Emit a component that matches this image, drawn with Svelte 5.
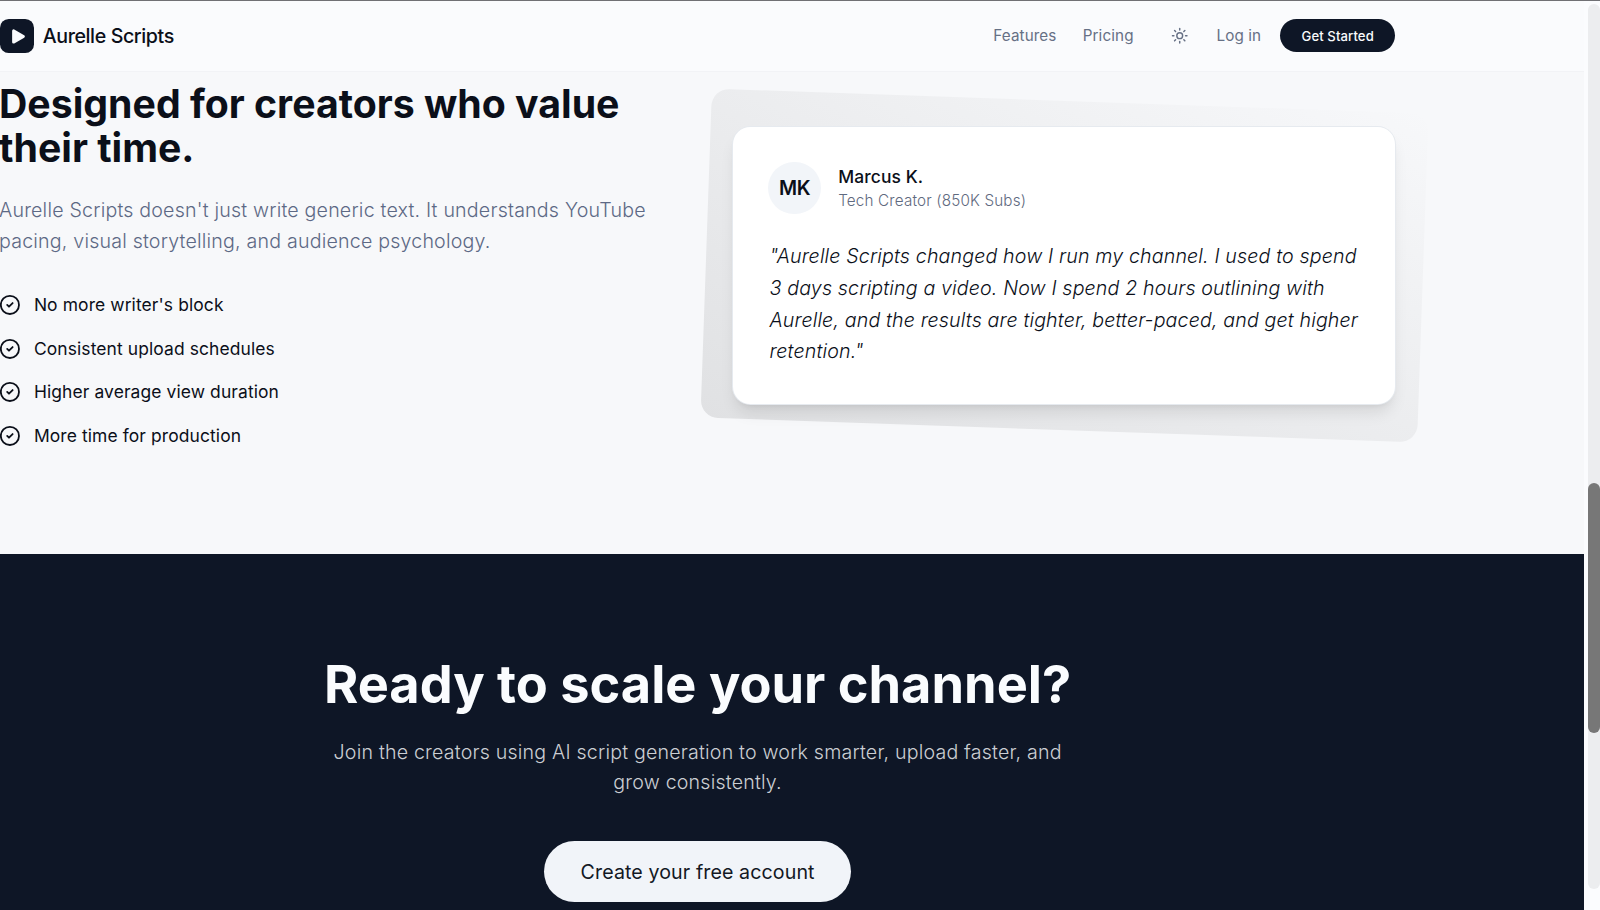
<script>
  const links = ['Features', 'Pricing'];

  const benefits = [
    "No more writer's block",
    'Consistent upload schedules',
    'Higher average view duration',
    'More time for production'
  ];

  const rays = [0, 45, 90, 135, 180, 225, 270, 315];
</script>

<div class="window">
  <div class="page">
    <header>
      <div class="container nav">
        <a class="brand" href="#top">
          <span class="logo">
            <svg viewBox="0 0 24 24" fill="currentColor" stroke="currentColor" stroke-width="4" stroke-linejoin="round">
              <path d="M5 4v16l14-8z" />
            </svg>
          </span>
          <span class="brand-name">Aurelle Scripts</span>
        </a>
        <nav>
          {#each links as link}
            <a class="link" href="#{link.toLowerCase()}">{link}</a>
          {/each}
          <button class="theme" aria-label="Toggle theme">
            <svg viewBox="0 0 24 24" fill="none" stroke="currentColor" stroke-width="2" stroke-linecap="round">
              <circle cx="12" cy="12" r="4" />
              {#each rays as angle}
                <path d="M12 2v2" transform="rotate({angle} 12 12)" />
              {/each}
            </svg>
          </button>
          <a class="link login" href="#login">Log in</a>
          <button class="start">Get Started</button>
        </nav>
      </div>
    </header>

    <section class="creators">
      <div class="container columns">
        <div class="copy">
          <h2>Designed for creators who value their time.</h2>
          <p>
            Aurelle Scripts doesn't just write generic text. It understands YouTube pacing, visual
            storytelling, and audience psychology.
          </p>
          <ul>
            {#each benefits as benefit}
              <li>
                <svg viewBox="0 0 24 24" fill="none" stroke="currentColor" stroke-width="2" stroke-linecap="round" stroke-linejoin="round">
                  <circle cx="12" cy="12" r="10" />
                  <path d="m9 12 2 2 4-4" />
                </svg>
                <span>{benefit}</span>
              </li>
            {/each}
          </ul>
        </div>
        <div class="testimonial">
          <div class="backdrop"></div>
          <div class="card">
            <div class="author">
              <div class="avatar">MK</div>
              <div>
                <div class="name">Marcus K.</div>
                <div class="role">Tech Creator (850K Subs)</div>
              </div>
            </div>
            <p class="quote">
              "Aurelle Scripts changed how I run my channel. I used to spend 3 days scripting a video.
              Now I spend 2 hours outlining with Aurelle, and the results are tighter, better-paced,
              and get higher retention."
            </p>
          </div>
        </div>
      </div>
    </section>

    <section class="cta">
      <div class="container cta-inner">
        <h2>Ready to scale your channel?</h2>
        <p>
          Join the creators using AI script generation to work smarter, upload faster, and grow
          consistently.
        </p>
        <button>Create your free account</button>
      </div>
    </section>
  </div>

  <div class="scrollbar">
    <div class="thumb"></div>
  </div>
</div>

<style>
  :global(html) {
    font-size: 17.44px;
  }

  :global(body) {
    overflow: hidden;
  }

  .window {
    display: flex;
    height: 910px;
    box-sizing: border-box;
    border-top: 1px solid #707074;
    background: #fbfcfe;
    font-family: Inter, sans-serif;
    letter-spacing: 0.006em;
    color: #0b0f19;
    overflow: hidden;
  }

  .page {
    width: 1584px;
    margin-right: 4px;
    display: flex;
    flex-direction: column;
    background: #f7f8fa;
  }

  .container {
    width: 80rem;
  }

  h2,
  p,
  ul {
    margin: 0;
    padding: 0;
  }

  a {
    color: inherit;
    text-decoration: none;
  }

  button {
    font: inherit;
    letter-spacing: inherit;
    border: none;
    padding: 0;
    cursor: pointer;
  }

  header {
    height: 71px;
    box-sizing: border-box;
    flex-shrink: 0;
    display: flex;
    background: #fafbfd;
    border-bottom: 1px solid #f2f3f6;
  }

  .nav {
    display: flex;
    align-items: center;
    justify-content: space-between;
  }

  .brand {
    display: flex;
    align-items: center;
    gap: 0.5rem;
  }

  .logo {
    width: 34px;
    height: 34px;
    border-radius: 0.5rem;
    background: #0e1626;
    color: #fafbfd;
    display: flex;
    align-items: center;
    justify-content: center;
  }

  .logo svg {
    width: 17px;
    height: 17px;
    margin-left: 2px;
  }

  .brand-name {
    font-size: 1.125rem;
    font-weight: 500;
    letter-spacing: -0.02em;
  }

  nav {
    display: flex;
    align-items: center;
    font-size: 0.875rem;
    color: #667085;
  }

  .link {
    margin-right: 1.5rem;
  }

  .theme {
    width: 2.25rem;
    height: 2.25rem;
    display: flex;
    align-items: center;
    justify-content: center;
    background: none;
    color: inherit;
    margin: 0 1rem 0 0;
  }

  .theme svg {
    width: 1rem;
    height: 1rem;
  }

  .login {
    margin-right: 19px;
  }

  .start {
    width: 115px;
    height: 33px;
    border-radius: 999px;
    background: #0e1626;
    color: #fafbfd;
    font-size: 0.75rem;
    font-weight: 500;
  }

  .creators {
    padding: 10px 0 6rem;
  }

  .columns {
    display: grid;
    grid-template-columns: 1fr 1fr;
    gap: 4rem;
    align-items: center;
  }

  .copy {
    margin-left: -1px;
  }

  .copy h2 {
    font-size: 2.25rem;
    line-height: 2.5rem;
    font-weight: 700;
    letter-spacing: 0;
    margin-bottom: 1.5rem;
  }

  .copy p {
    font-size: 1.125rem;
    line-height: 1.75rem;
    font-weight: 300;
    letter-spacing: 0.01em;
    color: #5d6985;
    margin-bottom: 35.6px;
  }

  ul {
    list-style: none;
    display: flex;
    flex-direction: column;
    gap: 1rem;
  }

  li {
    display: flex;
    align-items: center;
    gap: 0.75rem;
    line-height: 1.5rem;
  }

  li svg {
    width: 1.25rem;
    height: 1.25rem;
  }

  .testimonial {
    position: relative;
  }

  .backdrop {
    position: absolute;
    inset: -1.5rem -28px -1.5rem -1.5rem;
    border-radius: 1rem;
    background: linear-gradient(to top right, #e0e1e3, #f7f8fa);
    transform: rotate(2deg);
  }

  .card {
    position: relative;
    margin-left: 1px;
    padding: 35px 31px 36px 35px;
    border-radius: 1rem;
    background: #fff;
    box-shadow:
      0 0 0 1px #e6eaef,
      0 11px 16px -3px rgba(0, 0, 0, 0.1),
      0 4px 7px -4px rgba(0, 0, 0, 0.1);
  }

  .author {
    display: flex;
    align-items: center;
    gap: 1rem;
    margin-bottom: 27px;
  }

  .avatar {
    width: 3rem;
    height: 3rem;
    border-radius: 50%;
    background: #f2f5f9;
    display: flex;
    align-items: center;
    justify-content: center;
    font-size: 1.125rem;
    font-weight: 600;
    letter-spacing: -0.02em;
  }

  .name {
    font-weight: 500;
    line-height: 1.5rem;
  }

  .role {
    font-size: 0.875rem;
    line-height: 1.25rem;
    font-weight: 300;
    letter-spacing: 0.01em;
    color: #5f6a80;
  }

  .quote {
    padding-left: 1px;
    font-size: 1.125rem;
    line-height: 31.6px;
    font-weight: 300;
    font-style: italic;
    letter-spacing: 0.0075em;
  }

  .cta {
    flex: 1;
    padding-top: 6rem;
    background: #0e1626;
  }

  .cta-inner {
    display: flex;
    flex-direction: column;
    align-items: center;
    text-align: center;
  }

  .cta h2 {
    font-size: 3rem;
    line-height: 1;
    font-weight: 700;
    letter-spacing: 0;
    color: #fafcfe;
    margin-bottom: 1.5rem;
  }

  .cta p {
    max-width: 42rem;
    font-size: 1.125rem;
    line-height: 1.75rem;
    font-weight: 300;
    letter-spacing: 0.01em;
    color: #cbced3;
    margin-bottom: 2.5rem;
  }

  .cta button {
    width: 307px;
    height: 3.5rem;
    flex-shrink: 0;
    border-radius: 999px;
    background: #f1f4f9;
    color: #131824;
    font-size: 1.125rem;
  }

  .scrollbar {
    width: 12px;
    height: 885px;
    margin-top: 3px;
    border-radius: 6px;
    background: #ecedef;
  }

  .thumb {
    height: 250px;
    margin-top: 479px;
    border-radius: 6px;
    background: #777;
  }
</style>
